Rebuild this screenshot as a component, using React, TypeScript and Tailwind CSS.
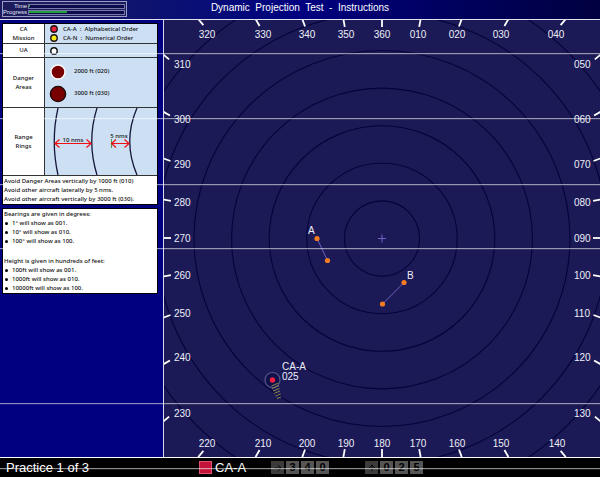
import type {JSX, ReactNode} from "react";
import React from "react";
import {ArrowRight, ArrowUp} from "lucide-react";

const CENTER = {x: 382, y: 238};
const RING_STEP = 37.6;

const scanLines = [
    "top-[53px]",
    "top-[118px]",
    "top-[184px]",
    "top-[248px]",
    "top-[403px]",
    "top-[468px]"
]

const topLabels: [string, number][] = [
    ["320", 207], ["330", 263], ["340", 307], ["350", 346], ["360", 382],
    ["010", 418], ["020", 457], ["030", 501], ["040", 556]
]

const bottomLabels: [string, number][] = [
    ["220", 207], ["210", 263], ["200", 307], ["190", 346], ["180", 382],
    ["170", 418], ["160", 457], ["150", 501], ["140", 557]
]

const sideLabels: [string, string, number][] = [
    ["310", "050", 68], ["300", "060", 123], ["290", "070", 168],
    ["280", "080", 206], ["270", "090", 242], ["260", "100", 279],
    ["250", "110", 317], ["240", "120", 361], ["230", "130", 417]
]

function Tick({bearing}: { bearing: number }): JSX.Element {
    const rad = bearing * Math.PI / 180
    const dx = Math.sin(rad)
    const dy = -Math.cos(rad)
    const outer = 219 / Math.max(Math.abs(dx), Math.abs(dy))
    const inner = outer - 8

    return <line x1={CENTER.x + dx * inner} y1={CENTER.y + dy * inner}
                 x2={CENTER.x + dx * outer} y2={CENTER.y + dy * outer}
                 stroke="#fff" strokeWidth="1.800"/>
}

function Track({from, to, label, labelX, labelY}: {
    from: [number, number],
    to: [number, number],
    label: string,
    labelX: number,
    labelY: number
}): JSX.Element {
    return <g>
        <line x1={from[0]} y1={from[1]} x2={to[0]} y2={to[1]} stroke="#6c62c4"/>
        {[from, to].map(([x, y]) => <circle key={x} cx={x} cy={y} r="2.6" fill="#f47c20"/>)}
        <text x={labelX} y={labelY}>{label}</text>
    </g>
}

function Radar(): JSX.Element {
    return <svg viewBox="164 20 436 437" role="img" aria-label="Radar"
                className="block h-auto w-full bg-[#1b1a56] font-['Liberation_Sans',sans-serif] text-[10px]">
        <g fill="none" stroke="#04033a" strokeWidth="1.100">
            {[1, 2, 3, 4, 5, 6, 7].map(n =>
                <circle key={n} cx={CENTER.x} cy={CENTER.y + 0.5} r={n * RING_STEP}/>
            )}
        </g>
        {Array.from({length: 36}, (_, i) => <Tick key={i} bearing={i * 10}/>)}

        <g fill="#eeeef8">
            <g textAnchor="middle">
                {topLabels.map(([text, x]) => <text key={text} x={x} y="38">{text}</text>)}
                {bottomLabels.map(([text, x]) => <text key={text} x={x} y="447">{text}</text>)}
            </g>
            {sideLabels.map(([left, right, y]) => <g key={left}>
                <text x="174" y={y}>{left}</text>
                <text x="574" y={y}>{right}</text>
            </g>)}

            <path d="M378 238.500h8M382 234.500v8" stroke="#6c62c4"/>
            <Track from={[317, 238.5]} to={[327.5, 260.5]} label="A" labelX={308} labelY={234}/>
            <Track from={[404, 282.5]} to={[382.5, 304]} label="B" labelX={407} labelY={279}/>

            <circle cx="272.500" cy="380" r="7.500" fill="#10104a" stroke="#56568c" strokeWidth="1.200"/>
            <circle cx="272.500" cy="380" r="2.700" fill="#f02040"/>
            <path d="M271.500 386l7-3M272 388.500l7-3M273 391l6.500-2.500M274 393.500l6-2.500M275.500 396l5-2M277 398.500l4-1.500"
                  stroke="#8a8850" strokeWidth="1"/>
            <text x="282" y="370">CA-A</text>
            <text x="282" y="380">025</text>
        </g>
    </svg>
}

function Dot({r, fill, stroke}: { r: number, fill: string, stroke: string }): JSX.Element {
    return <svg viewBox="0 0 18 18" className="size-[18px] shrink-0">
        <circle cx="9" cy="9" r={r} fill={fill} stroke={stroke} strokeWidth="1.400"/>
    </svg>
}

function RangeRings(): JSX.Element {
    return <svg viewBox="45 108 112 67" className="block h-auto w-full text-[6px]">
        <path d="M58 108Q50.500 141 58 175M97 108Q86.500 141 97 175M137 108Q122.500 141 137 175"
              fill="none" stroke="#16163c" strokeWidth="1.300"/>
        <path d="M111.500 139v9" stroke="#4a9a50"/>
        <path d="M55 143.500h36M59.500 139.500l-4.500 4 4.500 4M86.500 139.500l4.500 4-4.500 4M112 143.500h17M116 139.500l-4.500 4 4.500 4M124.500 139.500l4.500 4-4.500 4"
              fill="none" stroke="#f01010" strokeWidth="1.200"/>
        <g fill="#111" textAnchor="middle">
            <text x="73" y="142">10 nms</text>
            <text x="119" y="138">5 nms</text>
        </g>
    </svg>
}

function LegendRow({label, className, children}: {
    label: ReactNode,
    className: string,
    children: ReactNode
}): JSX.Element {
    return <tr className={className}>
        <th scope="row" className="w-[42px] border border-t-0 border-l-0 border-[#333] bg-white p-0 text-center font-medium">
            {label}
        </th>
        <td className="border-b border-[#333] bg-[#cddff3] p-0">{children}</td>
    </tr>
}

function Legend(): JSX.Element {
    return <section className="border border-black bg-white">
        <table className="w-full table-fixed border-separate border-spacing-0">
            <tbody>
            <LegendRow className="h-5" label={<>CA<br/>Mission</>}>
                <div className="flex h-[9px] items-center">
                    <Dot r={3.2} fill="#e8203c" stroke="#201018"/>
                    <span className="whitespace-pre">CA-A  :  Alphabetical Order</span>
                </div>
                <div className="flex h-[9px] items-center">
                    <Dot r={3.2} fill="#f6ec10" stroke="#201018"/>
                    <span className="whitespace-pre">CA-N  :  Numerical Order</span>
                </div>
            </LegendRow>
            <LegendRow className="h-[14px]" label="UA">
                <div className="flex h-3 items-center">
                    <Dot r={3.2} fill="#fff" stroke="#111"/>
                </div>
            </LegendRow>
            <LegendRow className="h-[50px]" label={<>Danger<br/>Areas</>}>
                <div className="flex items-center gap-[7px] pb-1 pl-1">
                    <Dot r={7} fill="#780000" stroke="#fff"/>
                    <span>2000 ft (020)</span>
                </div>
                <div className="flex items-center gap-[7px] pl-1">
                    <Dot r={7.6} fill="#780000" stroke="#1c0808"/>
                    <span>3000 ft (030)</span>
                </div>
            </LegendRow>
            <LegendRow className="h-[68px]" label={<>Range<br/>Rings</>}>
                <RangeRings/>
            </LegendRow>
            </tbody>
        </table>
        <div className="pt-px pl-px">
            <p>Avoid Danger Areas vertically by 1000 ft (010)</p>
            <p>Avoid other aircraft laterally by 5 nms.</p>
            <p>Avoid other aircraft vertically by 3000 ft (030).</p>
        </div>
    </section>
}

function Notes({title, items}: { title: string, items: string[] }): JSX.Element {
    return <>
        <p className="leading-[10px]">{title}</p>
        <ul>
            {items.map(item => <li key={item} className="flex items-center gap-1">
                <span className="ml-px size-[3px] rounded-full bg-black"/>{item}
            </li>)}
        </ul>
    </>
}

function Meter({label, value}: { label: string, value: number }): JSX.Element {
    return <div className="flex h-[6px] items-center gap-px">
        <span className="w-6 text-right text-[6px] leading-[6px] text-[#e4e4f8]">{label}</span>
        <div role="progressbar" aria-label={label} aria-valuenow={value}
             className="h-[5px] flex-1 border border-[#7777ac] bg-[#0c0c4c]">
            <div className="h-[2px] bg-[#22a03c]" style={{width: `${value}%`}}/>
        </div>
    </div>
}

function Keys({name, arrow, digits}: { name: string, arrow: ReactNode, digits: string[] }): JSX.Element {
    return <div className="flex gap-[2px] text-[11px] leading-[13px] font-bold text-black">
        <button type="button" aria-label={name} className="grid size-[13px] place-items-center bg-[#3c3c3c]">
            {arrow}
        </button>
        {digits.map((digit, i) => <button key={i} type="button" className="size-[13px] bg-[#555] text-center">
            {digit}
        </button>)}
    </div>
}

export default function App(): JSX.Element {
    return <div className="relative bg-black font-['Liberation_Sans',sans-serif] text-white">
        <header className="grid h-5 grid-cols-[1fr_auto_1fr] items-start border-b border-[#e0e0f0] bg-linear-to-r from-[#1a1a60] via-[#000080] to-[#000040]">
            <div className="mt-px ml-[2px] w-[125px] border border-[#9c9cc4] bg-[#1c1c5c] py-px pr-px">
                <Meter label="Time" value={1}/>
                <Meter label="Progress" value={40}/>
            </div>
            <h1 className="pt-[2px] text-[10px] leading-3 whitespace-pre">Dynamic  Projection  Test  -  Instructions</h1>
        </header>

        <main className="flex">
            <aside className="flex w-[163px] shrink-0 flex-col gap-[3px] bg-[#000080] pt-[3px] pr-[5px] pl-[2px] font-['Noto_Sans',sans-serif] text-[6px] leading-[9px] font-medium text-[#111]">
                <Legend/>
                <section className="border border-black bg-white pl-px">
                    <Notes title="Bearings are given in degrees:"
                           items={["1° will show as 001.", "10° will show as 010.", "100° will show as 100."]}/>
                    <div className="h-[10px]"/>
                    <Notes title="Height is given in hundreds of feet:"
                           items={["100ft will show as 001.", "1000ft will show as 010.", "10000ft will show as 100."]}/>
                </section>
            </aside>
            <div className="min-w-0 flex-1 border-l border-[#d8d8ee]">
                <Radar/>
            </div>
        </main>

        <footer className="flex h-5 items-center border-t border-white bg-black text-[13px] leading-4">
            <p className="w-[199px] pl-[6px]">Practice 1 of 3</p>
            <div className="flex w-[72px] items-center gap-[3px]">
                <span className="size-[13px] border border-[#e05070] bg-[#c41238]"/>
                CA-A
            </div>
            <div className="flex gap-9">
                <Keys name="Heading" arrow={<ArrowRight size={10}/>} digits={["3", "4", "0"]}/>
                <Keys name="Height" arrow={<ArrowUp size={10}/>} digits={["0", "2", "5"]}/>
            </div>
        </footer>

        {scanLines.map(top => <div key={top}
                                   className={`pointer-events-none absolute inset-x-0 h-[2px] border-t border-white/50 bg-white/10 ${top}`}/>)}
    </div>
}
